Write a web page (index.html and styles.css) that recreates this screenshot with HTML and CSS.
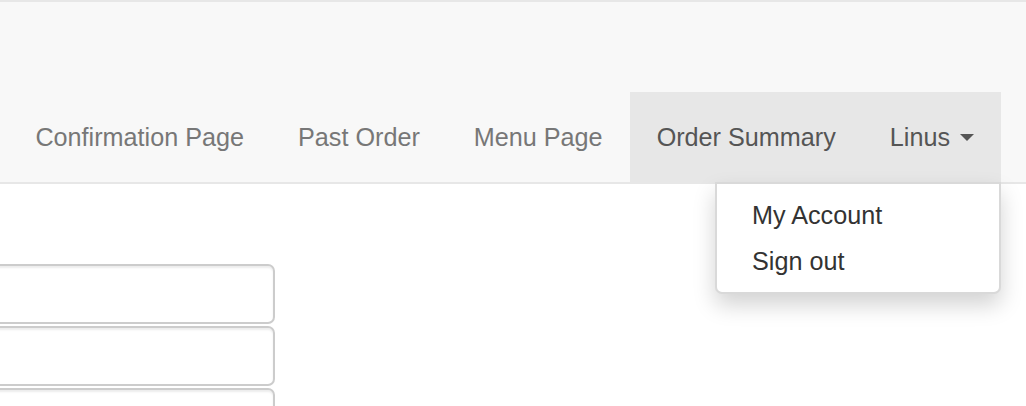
FILE: index.html
```html
<!DOCTYPE html>
<html>
<head>
<meta charset="utf-8">
<link rel="stylesheet" href="styles.css">
</head>
<body>
<nav class="navbar">
  <div class="navbar-header"></div>
  <ul class="nav">
    <li><a class="nav-link">Confirmation Page</a></li>
    <li><a class="nav-link">Past Order</a></li>
    <li><a class="nav-link">Menu Page</a></li>
    <li class="active"><a class="nav-link">Order Summary</a></li>
    <li class="active dropdown"><a class="nav-link">Linus <span class="caret"></span></a>
      <ul class="dropdown-menu">
        <li><a class="dropdown-item">My Account</a></li>
        <li><a class="dropdown-item">Sign out</a></li>
      </ul>
    </li>
  </ul>
</nav>
<form class="form">
  <input class="form-control" type="text">
  <input class="form-control" type="text">
  <input class="form-control" type="text">
</form>
</body>
</html>
```
FILE: styles.css
```css
html, body {
  margin: 0;
  padding: 0;
  background: #ffffff;
  font-family: "Liberation Sans", Arial, Helvetica, sans-serif;
  font-size: 25.2px;
  overflow: hidden;
}

.navbar {
  background: #f8f8f8;
  border-top: 2px solid #e7e7e7;
  border-bottom: 2px solid #e7e7e7;
}

.navbar-header {
  height: 90px;
}

.nav {
  display: flex;
  justify-content: flex-end;
  list-style: none;
  margin: 0;
  padding: 0 25px 0 0;
}

.nav > li {
  position: relative;
}

.nav-link {
  display: block;
  padding: 27px 27px;
  line-height: 36px;
  color: #777777;
  white-space: nowrap;
  cursor: pointer;
}

.nav > li.active {
  background: #e7e7e7;
}

.nav > li.active > .nav-link {
  color: #555555;
}

.caret {
  display: inline-block;
  width: 0;
  height: 0;
  margin-left: 3px;
  vertical-align: middle;
  border-top: 7px solid #555555;
  border-left: 7px solid transparent;
  border-right: 7px solid transparent;
  position: relative;
  top: -2px;
}

.dropdown-menu {
  position: absolute;
  top: 100%;
  right: 0;
  z-index: 10;
  box-sizing: border-box;
  min-width: 286px;
  margin: 0;
  padding: 8px 0;
  list-style: none;
  background: #ffffff;
  border: 2px solid rgba(0, 0, 0, 0.15);
  border-radius: 0 0 7px 7px;
  box-shadow: 0 11px 22px rgba(0, 0, 0, 0.175);
}

.dropdown-item {
  display: block;
  padding: 5px 35px;
  line-height: 36px;
  color: #333333;
  white-space: nowrap;
}

.form {
  display: flex;
  flex-direction: column;
  gap: 2px;
  margin: 80px 0 0 -60px;
  width: 335px;
}

.form-control {
  display: block;
  box-sizing: border-box;
  width: 335px;
  height: 60px;
  margin: 0;
  padding: 0 21px;
  font-family: inherit;
  font-size: 25px;
  background: #ffffff;
  border: 2px solid #cccccc;
  border-radius: 7px;
  box-shadow: inset 0 2px 2px rgba(0, 0, 0, 0.075);
}
```
